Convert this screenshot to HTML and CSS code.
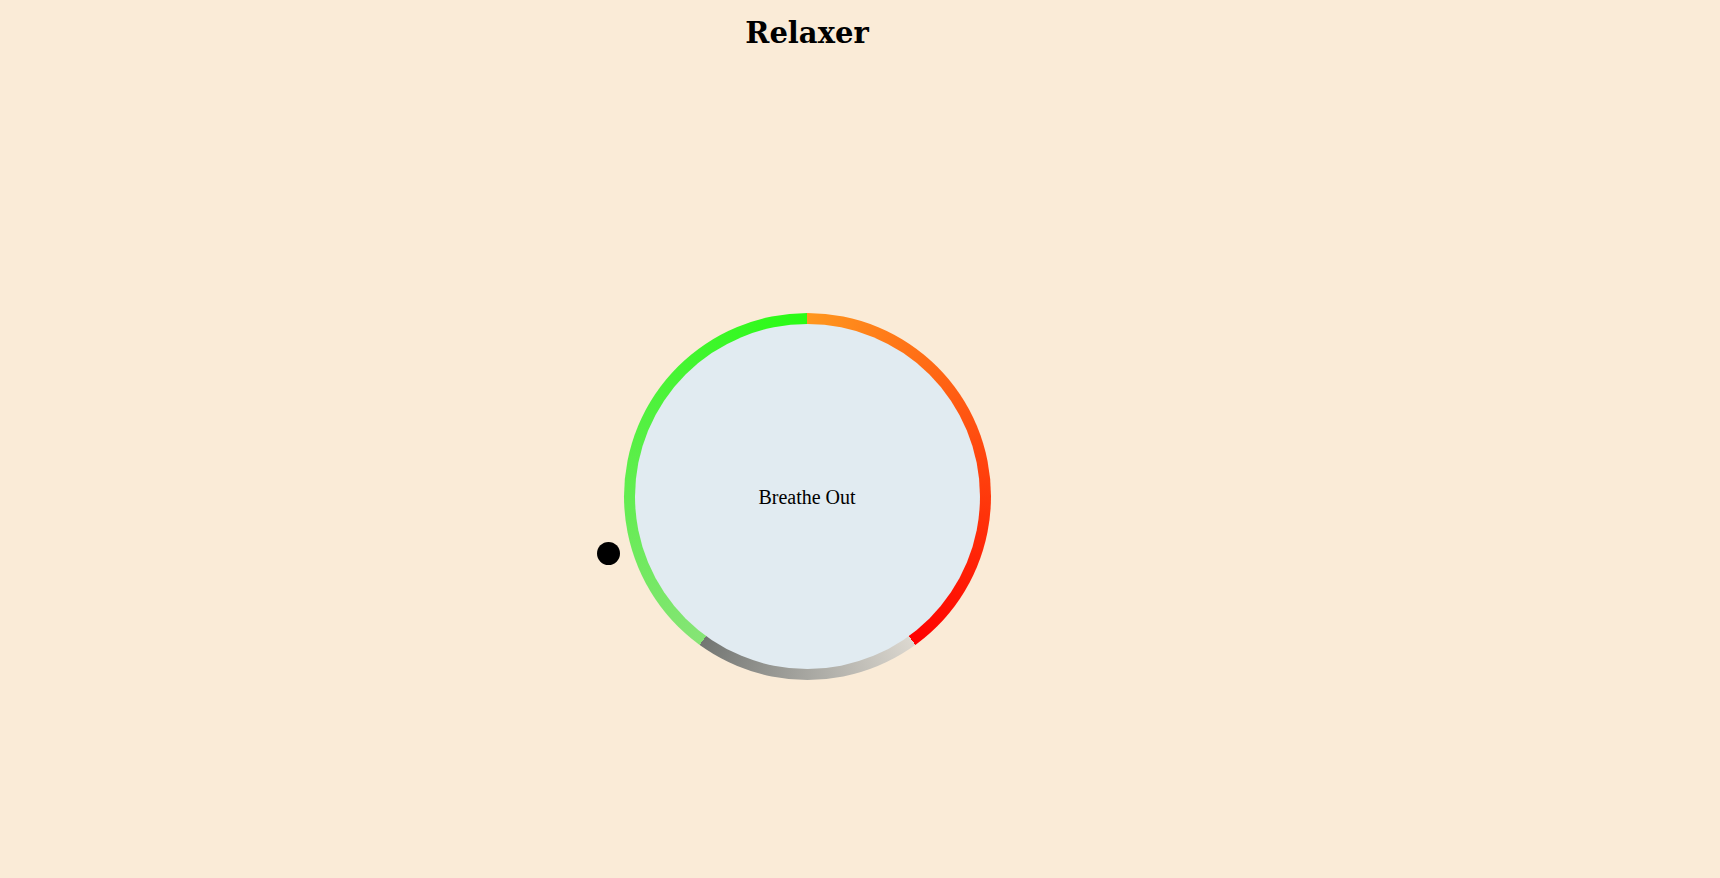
FILE: index.html
```html
<!DOCTYPE html>
<html lang="en">
<head>
<meta charset="utf-8">
<title>Relaxer</title>
<link rel="stylesheet" href="styles.css">
</head>
<body>
<div class="page">
  <h1 class="title">Relaxer</h1>
  <div class="breather">
    <div class="ring">
      <div class="face">
        <span class="phase">Breathe Out</span>
      </div>
    </div>
    <div class="pointer"></div>
  </div>
</div>
</body>
</html>
```

FILE: styles.css
```css
html, body {
  margin: 0;
  padding: 0;
  background: #faebd7;
}

body {
  font-family: "Liberation Serif", "Times New Roman", serif;
  color: #000;
  height: 878px;
  overflow: hidden;
}

.page {
  width: 1614px;
  display: flex;
  flex-direction: column;
  align-items: center;
}

.title {
  margin: 0;
  padding-top: 15px;
  font-family: "DejaVu Serif", serif;
  font-size: 29px;
  line-height: 36px;
  font-weight: bold;
}

.breather {
  position: relative;
  margin-top: 262px;
  width: 367px;
  height: 367px;
}

.ring {
  width: 367px;
  height: 367px;
  box-sizing: border-box;
  padding: 11px;
  border-radius: 50%;
  background: conic-gradient(
    #ff971e 0deg,
    #ff0000 144deg,
    #dcd8d0 144deg,
    #727572 216deg,
    #86e476 216deg,
    #28fc14 360deg
  );
}

.face {
  width: 100%;
  height: 100%;
  border-radius: 50%;
  background: #e1ebf1;
  display: flex;
  align-items: center;
  justify-content: center;
}

.phase {
  font-size: 20px;
  line-height: 24px;
}

.pointer {
  position: absolute;
  left: -27px;
  top: 229px;
  width: 23px;
  height: 23px;
  border-radius: 50%;
  background: #000;
}
```
